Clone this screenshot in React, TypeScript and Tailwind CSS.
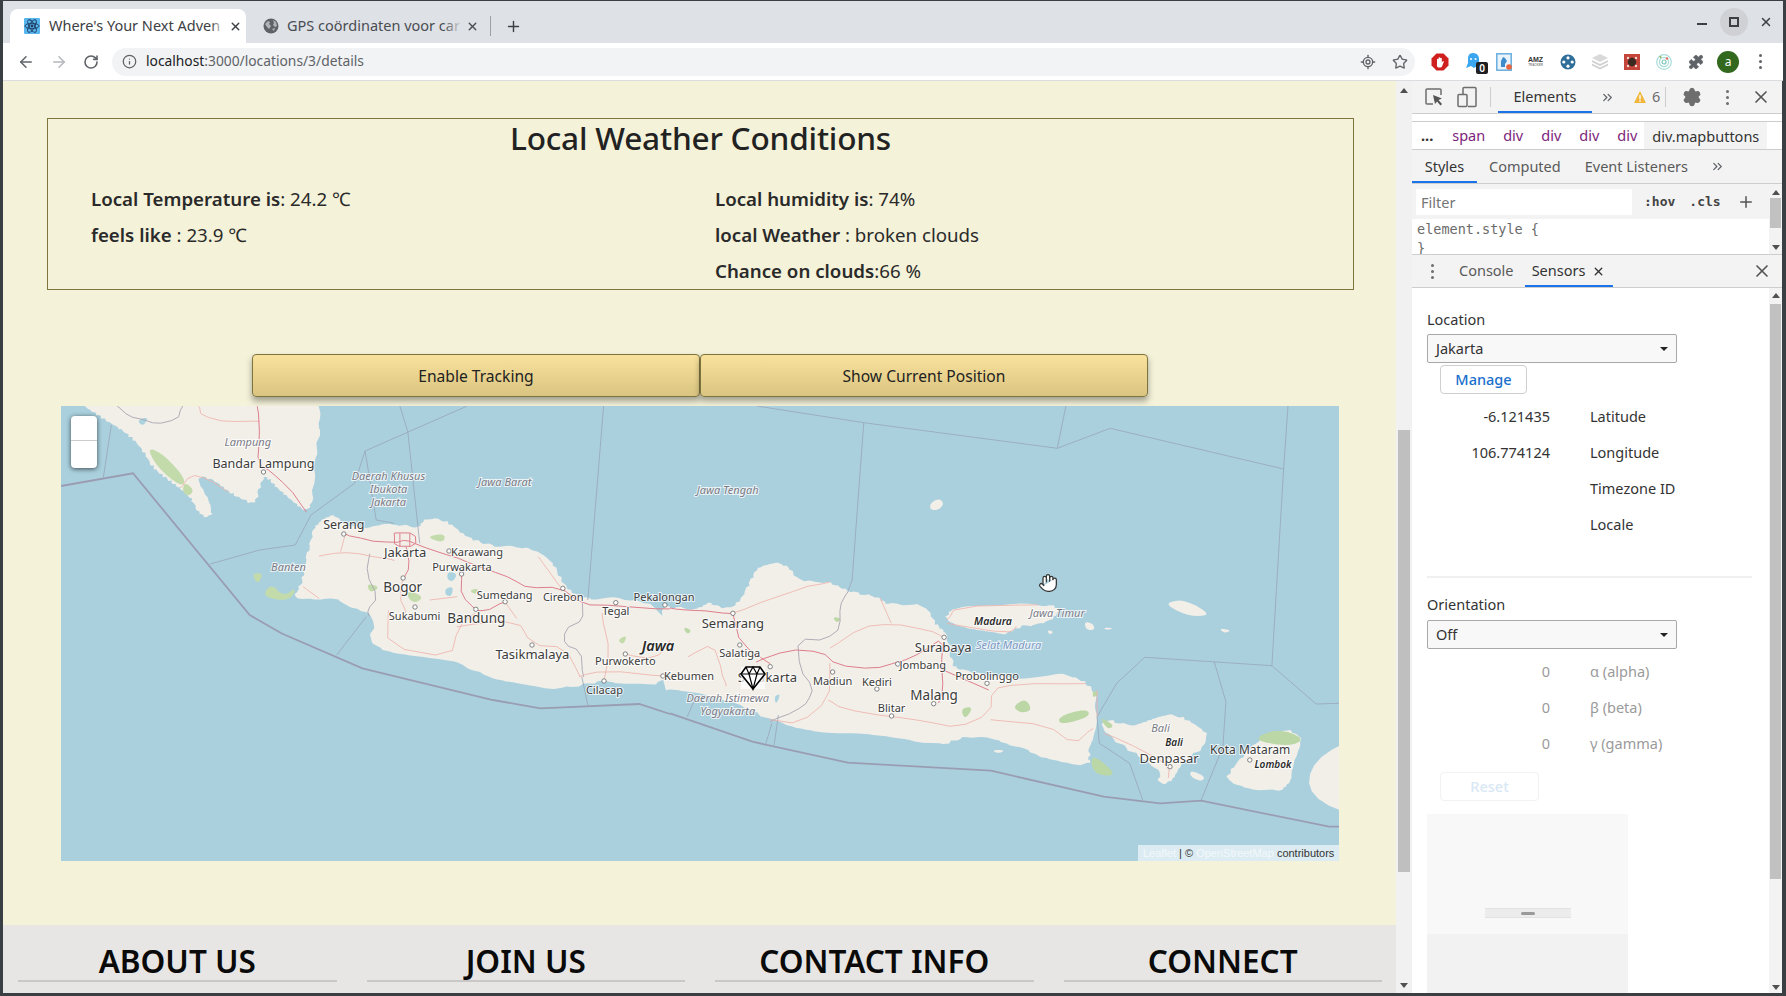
import React from "react";
import { ArrowLeft, ArrowRight, RotateCw, Info, Star, LocateFixed, X, Plus, ChevronsRight, Settings, Puzzle, Hand } from "lucide-react";

type F = (x: number, y: number) => string;
const z4: F = (x, y) => `${(50 + x / 2.529).toFixed(1)},${(400 + y / 3).toFixed(1)}`;
const z5: F = (x, y) => `${(670 + x / 2.306).toFixed(1)},${(400 + y / 3).toFixed(1)}`;
const mk = (f: F, a: number[]) => {
  const o: string[] = [];
  for (let i = 0; i < a.length; i += 2) o.push(f(a[i], a[i + 1]));
  return o.join(" ");
};
const chaikin = (a: number[], closed: boolean, it = 2) => {
  let c = a;
  for (let k = 0; k < it; k++) {
    const n = c.length / 2;
    const r: number[] = [];
    if (!closed) r.push(c[0], c[1]);
    const last = closed ? n : n - 1;
    for (let i = 0; i < last; i++) {
      const j = (i + 1) % n;
      const x0 = c[i * 2], y0 = c[i * 2 + 1], x1 = c[j * 2], y1 = c[j * 2 + 1];
      r.push(x0 * 0.75 + x1 * 0.25, y0 * 0.75 + y1 * 0.25, x0 * 0.25 + x1 * 0.75, y0 * 0.25 + y1 * 0.75);
    }
    if (!closed) r.push(c[c.length - 2], c[c.length - 1]);
    c = r;
  }
  return c;
};
const rough = (a: number[], amp: number) => a.map((v, i) => v + Math.sin(i * 12.9898 + v * 0.37) * amp);
const coast = (a: number[]) => rough(chaikin(chaikin(a, true, 1), true, 2), 3);
const soft = (a: number[]) => chaikin(a, true, 2);
const bend = (a: number[]) => (a.length > 4 ? rough(chaikin(a, false, 1), 1.4) : a);

const land4 = [
  [40,-40,85,18,120,45,155,70,200,105,235,150,260,205,300,240,330,265,355,290,380,350,415,350,400,290,370,230,410,235,450,275,490,300,520,315,530,260,545,225,570,260,610,300,650,340,665,300,670,180,685,70,678,18,678,-40],
  [670,375,700,345,730,350,740,375,800,385,870,370,935,385,945,350,1010,365,1050,410,1120,440,1210,440,1270,480,1300,560,1350,600,1420,590,1568,620,1568,860,1450,850,1400,840,1285,870,1200,850,1100,830,1020,780,900,765,800,735,830,650,770,630,720,590,610,605,640,540,640,510,660,420],
];
const land5 = [
  [-20,620,0,620,70,630,90,605,130,630,160,610,190,530,210,490,270,490,295,545,370,545,410,575,480,590,500,615,590,610,615,680,640,700,650,790,665,810,800,840,905,815,980,860,985,950,970,1040,965,1065,970,1095,900,1090,840,1060,760,1020,690,1005,620,1040,500,1010,400,1000,320,990,230,960,130,895,0,870,-20,868],
  [635,650,655,615,850,612,910,625,870,670,800,680,780,705,690,690,640,670],
  [990,950,1060,980,1100,960,1145,940,1200,960,1255,1020,1175,1090,1155,1150,1125,1150,1130,1110,1060,1050,1010,1010],
  [1280,1130,1340,1040,1400,980,1465,1010,1440,1090,1430,1165,1370,1175,1290,1150],
  [1470,1190,1480,1080,1600,1000,1600,1260],
  [1200,1110,1235,1130,1225,1145,1200,1130],
  [1150,605,1190,600,1250,645,1200,650,1150,620],
  [1265,685,1295,690,1280,700],
  [955,665,975,670,980,690,960,690],
  [600,310,620,295,632,310,620,330,600,330],
  [745,1050,770,1050,765,1058,750,1058],
  [870,690,885,695,875,705],
  [1000,682,1025,685,1005,690],
];
const green4 = [
  [245,140,290,165,345,240,330,260,270,200],[340,245,365,270,350,290,335,275],[535,590,560,550,590,590,625,560,605,605],[510,520,540,520,525,555],
  [800,550,835,560,810,580],[905,570,945,590,925,610,905,595],[1060,570,1085,565,1075,585],[1435,720,1460,705,1450,735],[950,410,1000,400,995,430],
];
const green5 = [
  [790,920,820,895,835,930,810,940],[895,950,960,925,970,950,900,975],[970,1060,1020,1110,1020,1130,975,1120],[1340,1020,1400,985,1465,1015,1430,1040],[670,925,700,920,680,960],[975,870,990,880,975,895],[375,650,395,655,385,670],[30,680,50,690,40,705],[990,950,1025,975,1010,990],
];
const thick4 = [28,258,210,220,505,645,585,700,790,805,1120,900,1240,925,1490,912,1568,942];
const thick5 = [0,940,190,1025,410,1088,740,1112,1000,1190,1130,1210,1225,1202,1520,1280,1543,1280];
const thin4 = [
  [135,232,155,75],[885,18,905,95,935,430],[1055,18,797,153,770,250,660,345,620,435,530,450,405,492],[797,153,825,360,870,370],[1400,18,1360,600],[725,765,800,650],[1360,915,1345,830],
];
const thin5 = [
  [200,18,447,68,420,540,410,575],[447,68,893,145,1015,85,1415,207,1388,797,1095,772,1030,850,985,950,990,1030,1060,1090,1090,1200],[1425,18,1415,207],[913,18,893,145],[1388,797,1490,912,1543,910],[1255,785,1282,905,1275,1040,1225,1200],[40,950,60,890],[220,1035,235,970],[240,1035,250,945],
];
const prov4 = [[1345,610,1350,660,1300,690,1300,735,1340,750,1350,830],[810,460,800,520,830,590,800,630,810,650],[170,18,200,50,240,60,265,72,320,60,335,18]];
const prov5 = [[410,575,390,620,395,680,360,720,295,715,300,810,330,860,320,905,290,935,230,965]];
const main4 = [
  [745,402,800,420,870,430,900,420,930,435,1010,465,1040,480,1110,512,1170,535,1210,565,1290,562,1345,612,1430,618,1568,628],
  [870,400,925,400,925,440,870,440,870,400],[885,400,885,440],[910,400,910,440],[900,440,912,500,893,535],[1040,522,1040,590,1075,628],[1075,628,1100,635,1150,605],
  [525,18,530,120,525,190,560,215,600,260,650,335],
];
const main5 = [
  [0,625,60,632,145,640],[145,640,165,735,230,790],[200,785,270,750,350,755,385,795,470,808,530,785,580,760,630,712,625,800,630,870,618,908],[630,810,735,870],
];
const minor4 = [
  [375,18,385,50,450,65,530,65],[680,470,735,455,800,465,870,480],[745,410,735,455],[640,560,680,595],[855,630,855,740,1015,775,1030,680,1075,640],[1030,680,1180,655,1220,735,1300,740,1340,830],[1395,640,1415,760,1400,840],[1340,830,1400,810,1568,830],[1450,760,1530,780,1568,720],[893,535,885,590,900,640],[1235,470,1290,560],
  [330,265,355,225,400,235,450,275],[1150,605,1180,655],[960,600,1030,590],
];
const minor5 = [
  [145,640,235,595,300,565,370,545],[370,745,440,680,510,670,600,690,630,712],[365,900,395,925,510,950,600,965,660,985,740,940,740,870,800,850,960,850],[740,960,870,975,930,1035,975,985],[485,595,510,670],[640,660,660,620,850,615],[1000,1000,1090,1050,1150,1100,1150,1135],[40,770,100,730,120,820,130,860],[230,960,300,970,365,900,370,790],
  [640,670,780,700,800,680],[985,870,985,950],
];
type L = [string, number, number, number, string?];
const labels4: L[] = [
  ["Bandar Lampung",540,204,12.5],["Serang",743,388,12.5],["Jakarta",898,472,13],["Karawang",1080,467,11],["Purwakarta",1042,513,11],["Bogor",892,577,13.5],["Sumedang",1150,596,11],["Cirebon",1298,602,11],["Sukabumi",922,659,11],["Bandung",1078,669,13.5],["Tegal",1431,644,11],["Tasikmalaya",1220,777,13],["Purwokerto",1455,796,11],["Cilacap",1402,881,11],
  ["Lampung",500,138,11,"i"],["Daerah Khusus",856,239,11,"i"],["Ibukota",856,279,11,"i"],["Jakarta",856,319,11,"i"],["Jawa Barat",1150,259,11,"i"],["Banten",603,513,11,"i"],
];
const labels5: L[] = [
  ["Semarang",145,685,13],["Salatiga",161,772,11],["Madiun",375,854,11],["Kediri",477,857,11],["Blitar",511,936,11],["Malang",609,899,13.5],["Jombang",583,808,11],["Surabaya",630,755,13],["Probolinggo",731,839,11],["Denpasar",1151,1088,13],["Kota Mataram",1338,1063,12],
  ["Jawa Tengah",133,282,11,"i"],["Jawa Timur",893,651,11,"i"],["Selat Madura",781,748,11,"b"],["Daerah Istimewa",133,906,11,"i"],["Yogyakarta",133,946,11,"i"],["Bali",1131,996,11,"i"],
];
const cities4 = [[540,216],[743,402],[1009,453],[1041,522],[893,534],[923,621],[1077,628],[1151,605],[1297,565],[1431,608],[1555,615],[1219,735],[1455,762],[1401,843],[1550,828]];
const cities5 = [[145,640],[161,735],[231,800],[375,816],[477,867],[511,948],[608,911],[525,792],[632,712],[731,850],[1153,1100],[1337,1080]];
const fontStack = "'Noto Sans',sans-serif";
function Lbl({ l, f }: { l: L; f: F }) {
  const [x, y] = f(l[1], l[2]).split(",");
  const it = l[4] === "i" || l[4] === "b";
  const col = l[4] === "b" ? "#7b98c4" : it ? "#7a7a85" : "#3b3b3b";
  return (
    <text x={x} y={y} textAnchor="middle" fontSize={l[3]} fontStyle={it ? "italic" : "normal"} fill={col} stroke="#ffffff" strokeOpacity={0.75} strokeWidth={2} paintOrder="stroke" fontFamily={fontStack}>
      {l[0]}
    </text>
  );
}
function Extra({ t, x, y, s = 11, bold, end }: { t: string; x: number; y: number; s?: number; bold?: boolean; end?: boolean }) {
  return (
    <text x={x} y={y} textAnchor={end ? "end" : "middle"} fontSize={s} fontStyle={bold ? "italic" : "normal"} fontWeight={bold ? 600 : 400} fill={bold ? "#2a2a2a" : "#3b3b3b"} stroke="#fff" strokeOpacity={0.72} strokeWidth="2" paintOrder="stroke" fontFamily={fontStack}>
      {t}
    </text>
  );
}

function JavaMap() {
  return (
    <svg viewBox="61 406 1278 455" width="1278" height="455" className="block">
      <rect x="61" y="406" width="1278" height="455" fill="#aad0de" />
      {land4.map((p, i) => <polygon key={i} points={mk(z4, coast(p))} fill="#f2efe9" />)}
      {land5.map((p, i) => <polygon key={i} points={mk(z5, p.length > 12 ? coast(p) : soft(p))} fill="#f2efe9" />)}
      {green4.map((p, i) => <polygon key={i} points={mk(z4, soft(p))} fill="#c3dbab" />)}
      {green5.map((p, i) => <polygon key={i} points={mk(z5, soft(p))} fill="#bcd7a6" />)}
      <polygon points={mk(z4, soft([1005,515,1030,520,1020,545,1005,540]))} fill="#aad3df" />
      <polygon points={mk(z4, soft([1000,565,1020,560,1015,590,1000,585]))} fill="#aad3df" />
      <polygon points={mk(z5, soft([240,890,255,880,245,915]))} fill="#aad3df" />
      <polygon points={mk(z4, soft([220,60,250,50,235,80]))} fill="#aad3df" />
      {thin4.map((p, i) => <polyline key={i} points={mk(z4, p)} fill="none" stroke="#98a6b8" strokeWidth="0.8" />)}
      {thin5.map((p, i) => <polyline key={i} points={mk(z5, p)} fill="none" stroke="#98a6b8" strokeWidth="0.8" />)}
      <polyline points={mk(z4, thick4)} fill="none" stroke="#9a9db2" strokeWidth="1.8" />
      <polyline points={mk(z5, thick5)} fill="none" stroke="#9a9db2" strokeWidth="1.8" />
      {prov4.map((p, i) => <polyline key={i} points={mk(z4, bend(p))} fill="none" stroke="#a9a4b0" strokeWidth="0.9" />)}
      {prov5.map((p, i) => <polyline key={i} points={mk(z5, bend(p))} fill="none" stroke="#a9a4b0" strokeWidth="0.9" />)}
      {minor4.map((p, i) => <polyline key={i} points={mk(z4, bend(p))} fill="none" stroke="#eeb0a8" strokeWidth="0.8" />)}
      {minor5.map((p, i) => <polyline key={i} points={mk(z5, bend(p))} fill="none" stroke="#eeb0a8" strokeWidth="0.8" />)}
      {main4.map((p, i) => <polyline key={i} points={mk(z4, bend(p))} fill="none" stroke="#de7f8c" strokeWidth="1" />)}
      {main5.map((p, i) => <polyline key={i} points={mk(z5, bend(p))} fill="none" stroke="#de7f8c" strokeWidth="1" />)}
      {cities4.map((c, i) => { const [x, y] = z4(c[0], c[1]).split(","); return <circle key={i} cx={x} cy={y} r="2.2" fill="#fff" stroke="#666" strokeWidth="0.8" />; })}
      {cities5.map((c, i) => { const [x, y] = z5(c[0], c[1]).split(","); return <circle key={i} cx={x} cy={y} r="2.2" fill="#fff" stroke="#666" strokeWidth="0.8" />; })}
      {labels4.map((l, i) => <Lbl key={i} l={l} f={z4} />)}
      {labels5.map((l, i) => <Lbl key={i} l={l} f={z5} />)}
      <Extra t="Jawa" x={658} y={651} s={14.5} bold />
      <Extra t="Pekalongan" x={664} y={601} />
      <Extra t="Kebumen" x={689} y={680} />
      <Extra t="Surakarta" x={797} y={682} s={13} end />
      <Extra t="Bali" x={1174} y={746} s={10} bold />
      <Extra t="Madura" x={993} y={625} s={10.5} bold />
      <Extra t="Lombok" x={1273} y={768} s={10} bold />
    </svg>
  );
}

function Diamond() {
  return (
    <svg viewBox="0 0 26 26" width="26" height="26" className="absolute left-[679px] top-[259px]">
      <rect x="1" y="2" width="24" height="22" fill="#ffffff" opacity="0.75" />
      <path d="M6 2h14l5 7-12 15L1 9z" fill="#fff" stroke="#000" strokeWidth="1.6" strokeLinejoin="round" />
      <path d="M1 9h24M6 2l3 7 4-7 4 7 3-7M9 9l4 15 4-15" fill="none" stroke="#000" strokeWidth="1.2" />
    </svg>
  );
}

function FooterCol({ t }: { t: string }) {
  return (
    <div className="w-[318.5px] border-b-2 border-[#c9c8c7] text-center">
      <div className="text-[31.5px] leading-[36px] font-semibold text-[#0a0a0a] pb-[1px]">{t}</div>
    </div>
  );
}

function ReactFav() {
  return (
    <svg viewBox="0 0 16 16" width="16" height="16" className="shrink-0">
      <rect width="16" height="16" rx="1" fill="#58b7ee" />
      <g fill="none" stroke="#1d3a5f" strokeWidth="0.9">
        <ellipse cx="8" cy="8" rx="7" ry="2.7" />
        <ellipse cx="8" cy="8" rx="7" ry="2.7" transform="rotate(60 8 8)" />
        <ellipse cx="8" cy="8" rx="7" ry="2.7" transform="rotate(120 8 8)" />
      </g>
      <circle cx="8" cy="8" r="1.4" fill="#1d3a5f" />
    </svg>
  );
}

function Extensions() {
  return (
    <div className="flex items-center ml-[9px] h-full text-[#5f6368]">
      <div className="w-[32px] flex justify-center">
        <svg viewBox="0 0 18 18" width="18" height="18"><polygon points="5.5,0.5 12.5,0.5 17.5,5.5 17.5,12.5 12.5,17.5 5.5,17.5 0.5,12.5 0.5,5.5" fill="#d01f1f" /><path d="M6 13V6.5a.8.8 0 011.6 0V9V5a.8.8 0 011.6 0v4V5.5a.8.8 0 011.6 0V9.5l.9-1.2c.6-.6 1.4.1 1 .7L11 13.5c-.5.7-1 1-2 1H8c-1.2 0-2-.6-2-1.5z" fill="#fff" /></svg>
      </div>
      <div className="w-[33px] flex justify-center relative">
        <svg viewBox="0 0 16 20" width="16" height="20"><path d="M8 1c4 0 6 3 6 6v9l-2.5-1.5L9 16l-3-2-5 2 2-5V7c0-3 1-6 5-6z" fill="#3aa6f0" /><circle cx="6" cy="7" r="1" fill="#fff" /><circle cx="10.5" cy="7" r="1" fill="#fff" /></svg>
        <div className="absolute left-[20px] top-[10px] w-[12px] h-[12px] rounded-[2px] bg-[#1f1f24] text-white text-[10px] leading-[12px] text-center font-semibold">0</div>
      </div>
      <div className="w-[30px] flex justify-center">
        <svg viewBox="0 0 16 18" width="16" height="18"><rect x="0.8" y="0.8" width="14.4" height="16.4" fill="#e8f3fb" stroke="#5fa8dc" strokeWidth="1.4" /><path d="M5 14V8l2-4 2 1 2 3-2 3v3z" fill="#3c8ccb" /><circle cx="13" cy="14" r="2.8" fill="#e8663d" /></svg>
      </div>
      <div className="w-[33px] flex flex-col items-center text-[7px] leading-[7px] font-bold text-[#333] font-['Liberation_Sans',sans-serif]">
        <span>AMZ</span>
        <span className="text-[3px] leading-[4px] text-[#888]">TRACKER</span>
      </div>
      <div className="w-[32px] flex justify-center">
        <svg viewBox="0 0 16 16" width="16" height="16"><circle cx="8" cy="8" r="7.5" fill="#2f6e99" /><circle cx="8" cy="3.8" r="1.6" fill="#fff" /><circle cx="8" cy="12.2" r="1.6" fill="#fff" /><circle cx="3.8" cy="8" r="1.6" fill="#fff" /><circle cx="12.2" cy="8" r="1.6" fill="#fff" /></svg>
      </div>
      <div className="w-[32px] flex justify-center">
        <svg viewBox="0 0 18 18" width="18" height="18"><path d="M9 1l8 4-8 4-8-4z" fill="#d9d9d9" /><path d="M1 8l8 4 8-4M1 11.5l8 4 8-4" fill="none" stroke="#cfcfcf" strokeWidth="1.6" /></svg>
      </div>
      <div className="w-[32px] flex justify-center">
        <svg viewBox="0 0 16 16" width="16" height="16"><rect width="16" height="16" fill="#c4463a" /><circle cx="8" cy="8" r="4.2" fill="#3a2a22" /><circle cx="4" cy="4" r="1.2" fill="#f4d8d2" /><circle cx="12" cy="4" r="1.2" fill="#f4d8d2" /><circle cx="4" cy="12" r="1.2" fill="#f4d8d2" /><circle cx="12" cy="12" r="1.2" fill="#f4d8d2" /></svg>
      </div>
      <div className="w-[32px] flex justify-center">
        <svg viewBox="0 0 16 16" width="16" height="16" fill="none"><circle cx="8" cy="8" r="7.3" stroke="#a8dcd8" strokeWidth="1.2" /><circle cx="8" cy="8" r="4.6" stroke="#a8dcd8" strokeWidth="1.2" /><circle cx="8" cy="8" r="2" stroke="#7cc6bd" strokeWidth="1.2" /><circle cx="11" cy="4.5" r="1.2" fill="#e56a5a" /><circle cx="4.5" cy="3" r="1" fill="#8ab04d" /></svg>
      </div>
      <div className="w-[32px] flex justify-center">
        <Puzzle size={16} fill="#5f6368" strokeWidth={1} />
      </div>
      <div className="w-[32px] flex justify-center">
        <div className="w-[22px] h-[22px] rounded-full bg-[#33691e] text-white text-[12px] leading-[22px] text-center">a</div>
      </div>
      <div className="w-[32px] flex justify-center">
        <div className="flex flex-col gap-[3px]">
          <span className="w-[3px] h-[3px] rounded-full bg-[#5f6368]" />
          <span className="w-[3px] h-[3px] rounded-full bg-[#5f6368]" />
          <span className="w-[3px] h-[3px] rounded-full bg-[#5f6368]" />
        </div>
      </div>
    </div>
  );
}

function Dots() {
  return (
    <div className="flex flex-col gap-[3px] items-center">
      <span className="w-[3px] h-[3px] rounded-full bg-[#6e6e6e]" />
      <span className="w-[3px] h-[3px] rounded-full bg-[#6e6e6e]" />
      <span className="w-[3px] h-[3px] rounded-full bg-[#6e6e6e]" />
    </div>
  );
}

function Sel({ t }: { t: string }) {
  return (
    <div className="ml-[15px] w-[250px] h-[29px] rounded-[2px] border border-[#a8a8a8] bg-[#f8f8f8] flex items-center justify-between pl-[8px] pr-[8px] text-[14.5px] text-[#333]">
      <span>{t}</span>
      <span className="w-0 h-0 border-l-[4px] border-r-[4px] border-t-[4px] border-l-transparent border-r-transparent border-t-[#222]" />
    </div>
  );
}

function Row({ v, l, dim }: { v?: string; l: string; dim?: boolean }) {
  return (
    <div className={`flex h-[36px] items-center text-[14.5px] ${dim ? "text-[#9a9a9a]" : "text-[#333]"}`}>
      <div className="w-[138px] text-right">{v}</div>
      <div className="ml-[40px]">{l}</div>
    </div>
  );
}

function Arrow({ up }: { up?: boolean }) {
  return up
    ? <span className="block w-0 h-0 border-l-[4px] border-r-[4px] border-b-[5px] border-l-transparent border-r-transparent border-b-[#505050]" />
    : <span className="block w-0 h-0 border-l-[4px] border-r-[4px] border-t-[5px] border-l-transparent border-r-transparent border-t-[#505050]" />;
}

function DevTools() {
  return (
    <div className="w-[370px] h-full bg-white flex flex-col text-[14.5px] text-[#5a5a5a]">
      <div className="h-[33px] bg-[#f3f3f3] border-b border-[#cdcdcd] flex items-center relative shrink-0">
        <div className="w-[33px] ml-[5px] flex justify-center">
          <svg viewBox="0 0 20 20" width="20" height="20" fill="none"><path d="M9 17H3a1 1 0 01-1-1V3a1 1 0 011-1h13a1 1 0 011 1v5" stroke="#6e6e6e" strokeWidth="1.5" /><path d="M9 8l9 3.5-3.5 1.5 3.5 4-1.5 1.5-3.5-4L11 17z" fill="#555" /></svg>
        </div>
        <div className="w-[33px] flex justify-center">
          <svg viewBox="0 0 20 22" width="20" height="22" fill="none" stroke="#6e6e6e" strokeWidth="1.5"><path d="M6 8V2.5a1 1 0 011-1h11a1 1 0 011 1v17a1 1 0 01-1 1H11" /><rect x="1" y="8.5" width="9" height="12" rx="1" /></svg>
        </div>
        <div className="w-px h-[20px] bg-[#cdcdcd] ml-[7px]" />
        <div className="ml-[7px] w-[94px] h-full text-center leading-[30px] text-[#333] border-b-2 border-[#1a73e8]">Elements</div>
        <ChevronsRight size={15} className="ml-[8px] text-[#5f6368]" />
        <svg viewBox="0 0 14 14" width="14" height="14" className="ml-[18px]"><path d="M7 1l6 12H1z" fill="#f2b63c" /><rect x="6.3" y="5" width="1.4" height="4.5" fill="#fff" /><rect x="6.3" y="10.3" width="1.4" height="1.4" fill="#fff" /></svg>
        <span className="ml-[5px] text-[#6e6e6e]">6</span>
        <div className="w-px h-[20px] bg-[#cdcdcd] ml-[5px]" />
        <Settings size={20} fill="#6e6e6e" stroke="#6e6e6e" className="ml-[16px]" />
        <div className="ml-[24px]"><Dots /></div>
        <X size={20} className="ml-[22px] text-[#555]" />
      </div>
      <div className="h-[8px] shrink-0 border-b border-[#cdcdcd]" />
      <div className="h-[28px] shrink-0 flex items-center border-b border-[#cdcdcd] text-[#7b1e7a] relative">
        <span className="ml-[9px] text-[#333] font-bold">...</span>
        <span className="ml-[19px]">span</span>
        <span className="ml-[18px]">div</span>
        <span className="ml-[18px]">div</span>
        <span className="ml-[18px]">div</span>
        <span className="ml-[18px]">div</span>
        <span className="ml-[7px] h-full px-[8px] leading-[28px] bg-[#f3f3f3] text-[#333]">div.mapbuttons</span>
      </div>
      <div className="h-[34px] shrink-0 bg-[#f3f3f3] flex items-center border-b border-[#cdcdcd]">
        <div className="w-[65px] h-full text-center leading-[32px] text-[#333] border-b-2 border-[#1a73e8]">Styles</div>
        <span className="ml-[12px]">Computed</span>
        <span className="ml-[24px]">Event Listeners</span>
        <ChevronsRight size={15} className="ml-[22px] text-[#5f6368]" />
      </div>
      <div className="h-[71px] shrink-0 flex border-b border-[#cdcdcd] overflow-hidden">
        <div className="flex-1 min-w-0 flex flex-col">
          <div className="h-[35px] shrink-0 bg-[#f3f3f3] flex items-center pl-[4px]">
            <div className="w-[216px] h-[26px] bg-white pl-[5px] leading-[26px] text-[#757575]">Filter</div>
            <span className="ml-[12px] text-[#444] font-bold font-['DejaVu_Sans_Mono',monospace] text-[13px]">:hov</span>
            <span className="ml-[14px] text-[#444] font-bold font-['DejaVu_Sans_Mono',monospace] text-[13px]">.cls</span>
            <Plus size={18} className="ml-[16px] text-[#555]" />
          </div>
          <div className="pl-[5px] pt-px font-['DejaVu_Sans_Mono',monospace] text-[13.5px] leading-[19px] text-[#6b6b6b]">
            <div>element.style {"{"}</div>
            <div>{"}"}</div>
          </div>
        </div>
        <div className="w-[13px] flex flex-col items-center bg-[#f3f3f3] pt-[6px]">
          <Arrow up />
          <div className="w-[11px] h-[30px] mt-[3px] bg-[#c1c1c1]" />
          <div className="mt-auto mb-[4px]"><Arrow /></div>
        </div>
      </div>
      <div className="h-[33px] shrink-0 bg-[#f3f3f3] border-b border-[#cdcdcd] flex items-center">
        <div className="ml-[19px]"><Dots /></div>
        <span className="ml-[25px]">Console</span>
        <div className="ml-[11px] w-[88px] h-full pt-[2px] flex items-center justify-center gap-[7px] border-b-2 border-[#1a73e8] text-[#333]">
          <span>Sensors</span>
          <X size={13} strokeWidth={2.5} />
        </div>
        <X size={20} className="ml-auto mr-[10px] text-[#555]" />
      </div>
      <div className="flex-1 min-h-0 flex overflow-hidden">
        <div className="flex-1 min-w-0 text-[#333] overflow-hidden">
          <div className="pl-[15px] pt-[21px] leading-[20px]">Location</div>
          <div className="mt-[5px]"><Sel t="Jakarta" /></div>
          <div className="ml-[28px] mt-[2px] w-[87px] h-[29px] border border-[#cfcfcf] rounded-[4px] text-center leading-[27px] text-[#1a6fcc] font-medium">Manage</div>
          <div className="mt-[5px]">
            <Row v="-6.121435" l="Latitude" />
            <Row v="106.774124" l="Longitude" />
            <Row l="Timezone ID" />
            <Row l="Locale" />
          </div>
          <div className="ml-[15px] w-[325px] h-[2px] bg-[#f0f0f0] mt-[33px]" />
          <div className="pl-[15px] mt-[16px] leading-[20px]">Orientation</div>
          <div className="mt-[6px]"><Sel t="Off" /></div>
          <div className="mt-[5px]">
            <Row v="0" l="α (alpha)" dim />
            <Row v="0" l="β (beta)" dim />
            <Row v="0" l="γ (gamma)" dim />
          </div>
          <div className="ml-[28px] mt-[10px] w-[99px] h-[29px] border border-[#f2f2f2] rounded-[4px] text-center leading-[27px] text-[#d8e8f5] font-medium">Reset</div>
          <div className="ml-[15px] mt-[13px] w-[201px] h-[180px] flex flex-col">
            <div className="h-[120px] bg-[#f8f8f8] flex items-end justify-center pb-[16px]">
              <div className="w-[86px] h-[10px] bg-[#ececec] border-y border-[#e2e2e2] flex items-center justify-center">
                <div className="w-[14px] h-[3px] rounded-full bg-[#9a9a9a]" />
              </div>
            </div>
            <div className="h-[60px] bg-[#f2f2f2]" />
          </div>
        </div>
        <div className="w-[13px] bg-[#f3f3f3] flex flex-col items-center pt-[5px] shrink-0">
          <Arrow up />
          <div className="w-[11px] h-[575px] mt-[6px] bg-[#c1c1c1]" />
          <div className="mt-auto mb-[3px]"><Arrow /></div>
        </div>
      </div>
    </div>
  );
}

export default function App() {
  return (
    <div className="w-[1786px] h-[996px] overflow-hidden bg-[#3a3f44] pt-px px-[3px] pb-[3px] flex flex-col font-['Noto_Sans',sans-serif]">
      <div className="h-[42px] shrink-0 bg-[#dee1e6] flex items-end relative">
        <div className="ml-[7px] w-[236px] h-[34px] bg-white rounded-t-[8px] flex items-center pl-[14px] pr-[4px] text-[14.5px] text-[#3c4043]">
          <ReactFav />
          <span className="ml-[9px] relative whitespace-nowrap overflow-hidden flex-1">
            Where's Your Next Adven
            <span className="absolute right-0 top-0 bottom-0 w-[14px] bg-gradient-to-l from-white to-transparent" />
          </span>
          <X size={13} strokeWidth={2.5} className="ml-[4px] text-[#3c4043] shrink-0" />
        </div>
        <div className="w-[244px] h-[34px] flex items-center pl-[17px] pr-[11px] text-[14.5px] text-[#4a4d52]">
          <svg viewBox="0 0 16 16" width="16" height="16" className="shrink-0"><circle cx="8" cy="8" r="7.5" fill="#5f6368" /><path d="M2 6l3-3 2 1-1 2 2 2-2 3-2-2zM10 2l3 2 1 4-2 1-2-2 1-2zM9 11l3-1-1 3z" fill="#dee1e6" opacity="0.65" /></svg>
          <span className="ml-[8px] relative whitespace-nowrap overflow-hidden flex-1">
            GPS coördinaten voor car
            <span className="absolute right-0 top-0 bottom-0 w-[18px] bg-gradient-to-l from-[#dee1e6] to-transparent" />
          </span>
          <X size={13} strokeWidth={2.5} className="ml-[4px] text-[#4a4d52] shrink-0" />
        </div>
        <div className="w-px h-[20px] bg-[#9aa0a6] mb-[7px]" />
        <Plus size={17} strokeWidth={2} className="ml-[14px] mb-[8px] text-[#3c4043]" />
        <div className="ml-auto flex items-center h-[42px] self-start text-[#3c4043] mr-[1px]">
          <div className="w-[32px] flex justify-center pt-[4px]"><div className="w-[10px] h-[2px] bg-[#3c4043]" /></div>
          <div className="w-[32px] flex justify-center">
            <div className="w-[28px] h-[28px] rounded-full bg-[#cfd1d5] flex items-center justify-center"><div className="w-[10px] h-[10px] border-2 border-[#3c4043]" /></div>
          </div>
          <div className="w-[32px] flex justify-center"><X size={14} strokeWidth={2.5} /></div>
        </div>
      </div>
      <div className="h-[38px] shrink-0 bg-white flex items-center border-b border-[#dadce0] text-[#5f6368]">
        <ArrowLeft size={18} className="ml-[14px]" />
        <ArrowRight size={18} className="ml-[15px] text-[#b4b7bb]" />
        <RotateCw size={16} strokeWidth={2.4} className="ml-[15px]" />
        <div className="ml-[13px] w-[1303px] h-[28px] bg-[#f1f3f4] rounded-full flex items-center pl-[10px] text-[13.8px]">
          <Info size={15} className="text-[#5f6368]" />
          <span className="ml-[9px] text-[#202124]">localhost</span>
          <span className="text-[#5f6368]">:3000/locations/3/details</span>
          <LocateFixed size={16} className="ml-auto" />
          <Star size={16} className="ml-[16px] mr-[7px]" />
        </div>
        <Extensions />
      </div>
      <div className="flex-1 min-h-0 flex">
        <div className="w-[1393px] h-full bg-[#f4f2d9] flex flex-col overflow-hidden">
          <div className="ml-[44px] mt-[37px] w-[1307px] h-[172px] shrink-0 border border-[#7d7440] flex flex-col">
            <div className="text-center text-[31.6px] leading-[38px] font-medium text-[#222] tracking-[-0.2px]">Local Weather Conditions</div>
            <div className="mt-[24px] flex text-[18.7px] leading-[36px] text-[#2a2a2a]">
              <div className="ml-[43px] w-[624px]">
                <div><b className="font-semibold">Local Temperature is</b>: 24.2 ℃</div>
                <div><b className="font-semibold">feels like</b> : 23.9 ℃</div>
              </div>
              <div>
                <div><b className="font-semibold">Local humidity is</b>: 74%</div>
                <div><b className="font-semibold">local Weather</b> : broken clouds</div>
                <div><b className="font-semibold">Chance on clouds</b>:66 %</div>
              </div>
            </div>
          </div>
          <div className="mt-[64px] ml-[249px] flex shrink-0">
            {["Enable Tracking", "Show Current Position"].map((t) => (
              <div key={t} className="w-[448px] h-[43px] rounded-[4px] border border-[#7d7440] bg-gradient-to-b from-[#f8e29c] to-[#dac481] shadow-[0_4px_6px_rgba(0,0,0,0.35)] text-center leading-[42px] text-[15.6px] text-[#222]">{t}</div>
            ))}
          </div>
          <div className="mt-[9px] ml-[58px] relative w-[1278px] h-[455px] shrink-0 overflow-hidden">
            <JavaMap />
            <div className="absolute left-[10px] top-[10px] w-[26px] h-[52px] bg-white rounded-[4px] shadow-[0_1px_5px_rgba(0,0,0,0.65)] flex flex-col">
              <div className="h-[25px] border-b border-[#ccc]" />
            </div>
            <Diamond />
            <Hand size={20} fill="#fff" stroke="#333" strokeWidth={1.5} className="absolute left-[977px] top-[167px]" />
            <div className="absolute right-0 bottom-0 h-[16px] w-[201px] bg-white/60 pl-[5px] text-[11px] leading-[16px] text-[#333] whitespace-nowrap font-['Liberation_Sans',sans-serif]">
              <span className="text-[#f2f8fb]">Leaflet</span> | © <span className="text-[#f2f8fb]">OpenStreetMap</span> contributors
            </div>
          </div>
          <div className="mt-[64px] flex-1 min-h-0 bg-[#e7e6e4] pl-[15px] pt-[18px] flex gap-[30px] items-start">
            <FooterCol t="ABOUT US" />
            <FooterCol t="JOIN US" />
            <FooterCol t="CONTACT INFO" />
            <FooterCol t="CONNECT" />
          </div>
        </div>
        <div className="w-[16px] h-full bg-[#f1f1f1] flex flex-col items-center pt-[7px]">
          <Arrow up />
          <div className="w-[12px] h-[442px] mt-[337px] bg-[#bfbfbf]" />
          <div className="mt-auto mb-[5px]"><Arrow /></div>
        </div>
        <DevTools />
      </div>
    </div>
  );
}
